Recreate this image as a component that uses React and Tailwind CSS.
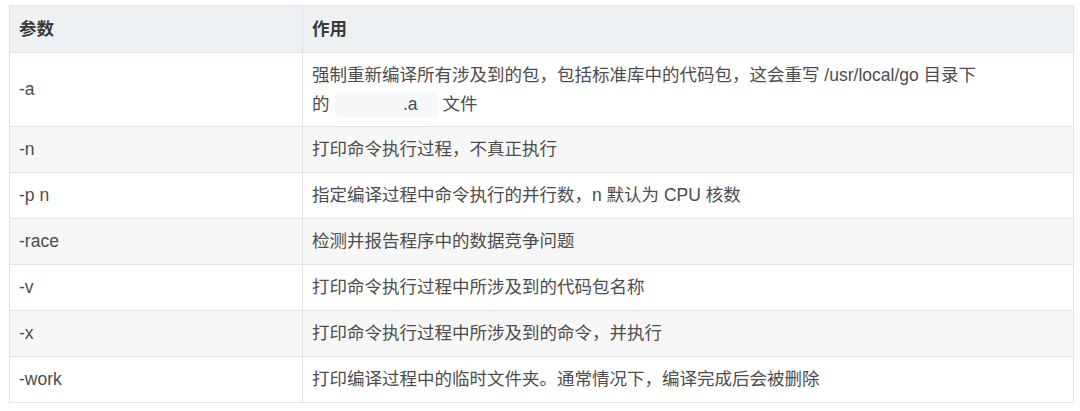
import React from 'react';

const rows = [
    { flag: '-a', desc: null },
    { flag: '-n', desc: '打印命令执行过程，不真正执行' },
    { flag: '-p n', desc: '指定编译过程中命令执行的并行数，n 默认为 CPU 核数' },
    { flag: '-race', desc: '检测并报告程序中的数据竞争问题' },
    { flag: '-v', desc: '打印命令执行过程中所涉及到的代码包名称' },
    { flag: '-x', desc: '打印命令执行过程中所涉及到的命令，并执行' },
    { flag: '-work', desc: '打印编译过程中的临时文件夹。通常情况下，编译完成后会被删除' },
];

export default function App() {
    return (
        <div
            className="w-[1080px] h-[411px] bg-white pt-[5px] pl-[9px]"
            style={{ fontFamily: '"Liberation Sans", "Noto Sans CJK SC", sans-serif' }}
        >
            <table className="w-[1065px] border-collapse text-[17.5px] text-[#4d4d4d]">
                <thead>
                    <tr className="bg-[#eef1f4]">
                        <th className="w-[293px] h-[47px] border border-[#e1e4e8] px-[9px] text-left font-bold text-[#3a3a3a]">参数</th>
                        <th className="h-[47px] border border-[#e1e4e8] px-[9px] text-left font-bold text-[#3a3a3a]">作用</th>
                    </tr>
                </thead>
                <tbody>
                    {rows.map((r, i) => (
                        <tr key={r.flag} className={i % 2 === 1 ? 'bg-[#f7f7f7]' : 'bg-white'}>
                            <td className={`${i === 0 ? 'h-[74px]' : 'h-[46px]'} border border-[#e1e4e8] px-[9px]`}>{r.flag}</td>
                            <td className="border border-[#e1e4e8] px-[9px] leading-[29px]">
                                {r.desc ?? (
                                    <>
                                        强制重新编译所有涉及到的包，包括标准库中的代码包，这会重写 /usr/local/go 目录下
                                        <br />
                                        的
                                        <span className="inline-block w-[103px] h-[25px] mx-[5px] rounded-[3px] bg-[#f6f8fa] pr-[20px] text-right align-middle leading-[25px]">.a</span>
                                        文件
                                    </>
                                )}
                            </td>
                        </tr>
                    ))}
                </tbody>
            </table>
        </div>
    );
}
